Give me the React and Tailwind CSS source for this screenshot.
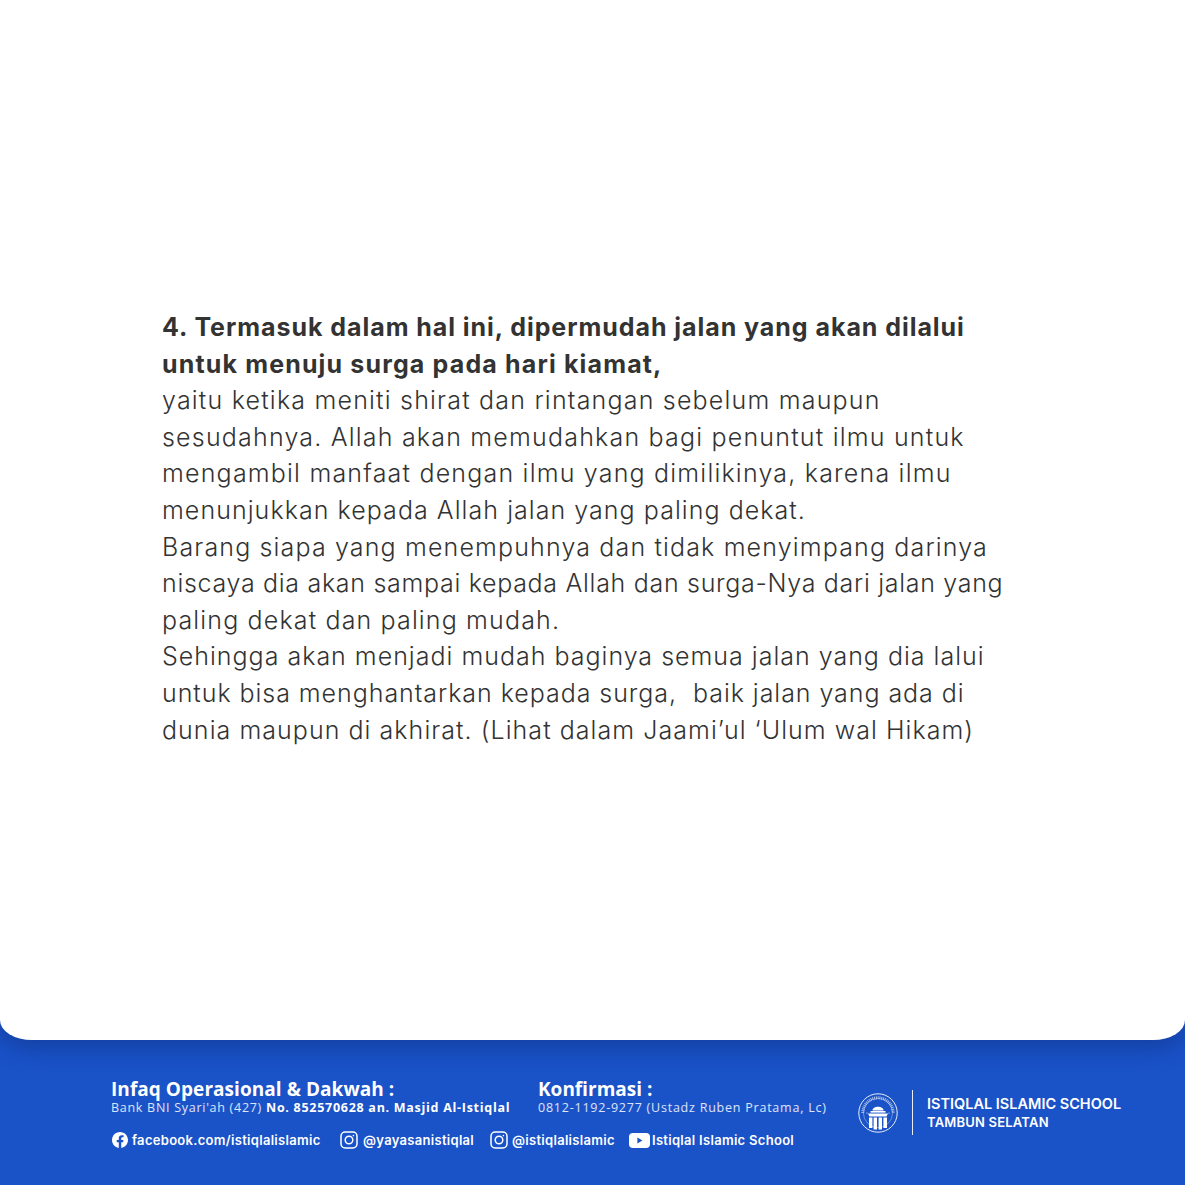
// tracking is per line: the stand-in font's letter widths differ from the original's
const LINES = [
  ["yaitu ketika meniti shirat dan rintangan sebelum maupun", "tracking-[1.2px]"],
  ["sesudahnya. Allah akan memudahkan bagi penuntut ilmu untuk", "tracking-[1.2px]"],
  ["mengambil manfaat dengan ilmu yang dimilikinya, karena ilmu", "tracking-[1.2px]"],
  ["menunjukkan kepada Allah jalan yang paling dekat.", "tracking-[1.05px]"],
  ["Barang siapa yang menempuhnya dan tidak menyimpang darinya", "tracking-[1.15px]"],
  ["niscaya dia akan sampai kepada Allah dan surga-Nya dari jalan yang", "tracking-[0.7px]"],
  ["paling dekat dan paling mudah.", "tracking-[1.15px]"],
  ["Sehingga akan menjadi mudah baginya semua jalan yang dia lalui", "tracking-[1px]"],
  ["untuk bisa menghantarkan kepada surga,  baik jalan yang ada di", "tracking-[0.95px]"],
  ["dunia maupun di akhirat. (Lihat dalam Jaami’ul ‘Ulum wal Hikam)", "tracking-[1.05px]"],
];

function FacebookIcon() {
  return (
    <svg viewBox="0 0 24 24" className="ml-px h-[16px] w-[16px] shrink-0" fill="white">
      <path d="M24 12.07C24 5.4 18.63 0 12 0S0 5.4 0 12.07c0 6.03 4.39 11.02 10.13 11.93v-8.44H7.08v-3.49h3.05V9.41c0-3.02 1.79-4.7 4.53-4.7 1.31 0 2.69.24 2.69.24v2.97h-1.51c-1.49 0-1.96.93-1.96 1.89v2.26h3.33l-.53 3.49h-2.8V24C19.61 23.09 24 18.1 24 12.07z" />
    </svg>
  );
}

function InstagramIcon() {
  return (
    <svg viewBox="0 0 18 18" className="h-[18px] w-[18px] shrink-0" fill="none" stroke="white" strokeWidth="1.5">
      <rect x="1" y="1" width="16" height="16" rx="4.2" />
      <circle cx="9" cy="9" r="3.8" />
      <circle cx="13.4" cy="4.6" r="0.8" fill="white" stroke="none" />
    </svg>
  );
}

function YoutubeIcon() {
  return (
    <svg viewBox="0 0 21 15" className="h-[15px] w-[21px] shrink-0">
      <rect x="0" y="0" width="21" height="15" rx="4" fill="white" />
      <path d="M8.4 4.4 L13.4 7.5 L8.4 10.6 Z" fill="#1a52c8" />
    </svg>
  );
}

// school crest, only legible as a ring with a small domed building at this size
function Crest() {
  return (
    <svg viewBox="0 0 40 40" className="h-[40px] w-[40px] shrink-0" fill="none">
      <circle cx="20" cy="20" r="19.2" stroke="white" strokeWidth="0.9" />
      <circle cx="20" cy="20" r="14.6" stroke="white" strokeWidth="0.5" opacity="0.7" />
      <path d="M4.8 20 A15.2 15.2 0 0 1 35.2 20" stroke="white" strokeWidth="3" strokeDasharray="1 0.8" opacity="0.6" />
      <path d="M14.5 17.5 C14.5 12.5 25.5 12.5 25.5 17.5 Z" fill="white" />
      <rect x="12.5" y="18" width="15" height="1.6" fill="white" />
      <path d="M10 20.5 H30 L28.5 23.5 H11.5 Z" fill="white" />
      <path d="M11 24.5 H14.4 V35 H11 Z M15.6 24.5 H19 V36.5 H15.6 Z M20.6 24.5 H24 V36.5 H20.6 Z M25.4 24.5 H29 V35 H25.4 Z" fill="white" />
      <circle cx="9" cy="20" r="0.6" fill="white" />
      <circle cx="31" cy="20" r="0.6" fill="white" />
    </svg>
  );
}

function SocialLink({ icon, label, box }) {
  return (
    <div className={`flex items-center ${box}`}>
      {icon}
      <span className="font-['Inter',sans-serif] text-[13px] font-semibold leading-none tracking-[0.3px] text-white whitespace-nowrap">{label}</span>
    </div>
  );
}

export default function App() {
  return (
    <div className="flex h-[1185px] w-[1185px] flex-col overflow-hidden bg-[#1a52c8] font-['Open_Sans',sans-serif]">
      <main className="relative flex h-[1040px] shrink-0 flex-col rounded-bl-[32px_20px] rounded-br-[32px_20px] bg-white pl-[162px] pt-[309px] font-['Inter',sans-serif] shadow-[0_6px_24px_rgba(10,30,90,0.4)]">
        <h1 className="text-[25px] font-bold leading-[36.6px] text-[#333333] whitespace-nowrap">
          <span className="block tracking-[0.95px]">4. Termasuk dalam hal ini, dipermudah jalan yang akan dilalui</span>
          <span className="block tracking-[1.15px]">untuk menuju surga pada hari kiamat,</span>
        </h1>
        <p className="text-[25px] font-light leading-[36.6px] text-[#333333] whitespace-pre">
          {LINES.map(([line, tracking]) => (
            <span key={line} className={`block ${tracking}`}>{line}</span>
          ))}
        </p>
      </main>

      <footer className="flex flex-1 items-start pl-[111px] pt-[39px]">
        <div className="flex w-[747px] shrink-0 flex-col">
          <div className="flex">
            <div className="w-[427px] shrink-0">
              <div className="text-[19px] font-bold leading-[20px] tracking-[0.05px] text-white">Infaq Operasional &amp; Dakwah :</div>
              <div className="text-[12.5px] leading-[18px] tracking-[0.72px] text-white/85 whitespace-nowrap">
                Bank BNI Syari'ah (427) <span className="font-bold text-white">No. 852570628 an. Masjid Al-Istiqlal</span>
              </div>
            </div>
            <div>
              <div className="text-[19px] font-bold leading-[20px] text-white">Konfirmasi :</div>
              <div className="text-[12.5px] leading-[18px] tracking-[0.77px] text-white/85 whitespace-nowrap">0812-1192-9277 (Ustadz Ruben Pratama, Lc)</div>
            </div>
          </div>
          <div className="mt-[14px] flex items-center">
            <SocialLink icon={<FacebookIcon />} label="facebook.com/istiqlalislamic" box="gap-[4px] w-[229px]" />
            <SocialLink icon={<InstagramIcon />} label="@yayasanistiqlal" box="gap-[5px] w-[150px]" />
            <SocialLink icon={<InstagramIcon />} label="@istiqlalislamic" box="gap-[4px] w-[139px]" />
            <SocialLink icon={<YoutubeIcon />} label="Istiqlal Islamic School" box="gap-[2px]" />
          </div>
        </div>

        <div className="mt-[11px] flex items-center font-['Inter',sans-serif]">
          <Crest />
          <div className="ml-[14px] h-[45px] w-px bg-white/90" />
          <div className="ml-[14px] whitespace-nowrap text-white">
            <div className="text-[14.5px] font-semibold leading-[18px]">ISTIQLAL ISLAMIC SCHOOL</div>
            <div className="text-[13px] font-semibold leading-[18px] tracking-[0.2px]">TAMBUN SELATAN</div>
          </div>
        </div>
      </footer>
    </div>
  );
}
